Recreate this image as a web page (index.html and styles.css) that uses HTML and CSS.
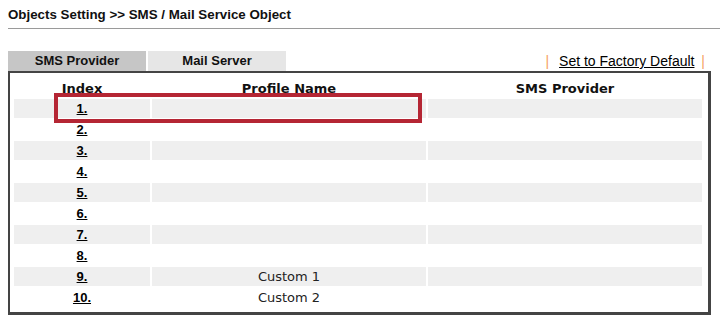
FILE: index.html
```html
<!DOCTYPE html>
<html>
<head>
    <link rel="stylesheet" href="styles.css">
</head>
<body>
    <div class="page">
        <div class="title">Objects Setting &gt;&gt; SMS / Mail Service Object</div>

        <div class="tab-bar">
            <div class="tabs">
                <span class="tab active">SMS Provider</span>
                <span class="tab">Mail Server</span>
            </div>
            <div class="factory">
                <span class="sep">|</span>
                <a href="#">Set to Factory Default</a>
                <span class="sep">|</span>
            </div>
        </div>

        <div class="box">
            <table class="list">
                <thead>
                    <tr>
                        <th class="col-index">Index</th>
                        <th class="col-name">Profile Name</th>
                        <th class="col-provider">SMS Provider</th>
                    </tr>
                </thead>
                <tbody>
                    <tr class="odd"><td><a href="#">1.</a></td><td></td><td></td></tr>
                    <tr><td><a href="#">2.</a></td><td></td><td></td></tr>
                    <tr class="odd"><td><a href="#">3.</a></td><td></td><td></td></tr>
                    <tr><td><a href="#">4.</a></td><td></td><td></td></tr>
                    <tr class="odd"><td><a href="#">5.</a></td><td></td><td></td></tr>
                    <tr><td><a href="#">6.</a></td><td></td><td></td></tr>
                    <tr class="odd"><td><a href="#">7.</a></td><td></td><td></td></tr>
                    <tr><td><a href="#">8.</a></td><td></td><td></td></tr>
                    <tr class="odd"><td><a href="#">9.</a></td><td>Custom 1</td><td></td></tr>
                    <tr><td><a href="#">10.</a></td><td>Custom 2</td><td></td></tr>
                </tbody>
            </table>
            <!-- highlight around the first profile -->
            <div class="highlight"></div>
        </div>
    </div>
</body>
</html>
```

FILE: styles.css
```css
body {
    margin: 0;
    padding: 0;
    background: #ffffff;
    color: #000;
    font-family: "Liberation Sans", Arial, sans-serif;
}

.page {
    padding-left: 8px;
}

.title {
    font-size: 13.33px;
    font-weight: bold;
    line-height: 16px;
    padding: 7px 0 5px 0;
    border-bottom: 1px solid #9a9a9a;
    color: #111;
}

.tab-bar {
    display: flex;
    justify-content: space-between;
    align-items: flex-end;
    width: 700px;
    margin-top: 22px;
}

.tabs {
    display: flex;
    gap: 2px;
}

.tab {
    width: 138px;
    height: 20px;
    line-height: 20px;
    text-align: center;
    font-size: 13px;
    font-weight: bold;
    background: #e6e6e6;
    color: #111;
}

.tab.active {
    background: #c6c6c6;
}

.factory {
    font-size: 14px;
    line-height: 16px;
    padding-bottom: 2px;
    padding-right: 3px;
}

.factory a {
    color: #000;
    text-decoration: underline;
}

.sep {
    color: #f5a064;
    padding: 0 6px;
}

.sep:last-child {
    padding-right: 0;
    padding-left: 3px;
}

.box {
    position: relative;
    width: 695px;
    border: 2px solid #444;
    border-right-width: 3px;
    border-bottom-width: 3px;
    padding: 1px 1px 3px 2px;
}

.list {
    border-spacing: 2px;
    font-family: "DejaVu Sans", Verdana, sans-serif;
    font-size: 13px;
}

.list th {
    height: 21px;
    padding: 0;
    font-weight: bold;
    text-align: center;
    vertical-align: bottom;
    line-height: 17px;
    color: #111;
}

.col-index {
    width: 136px;
}

.col-name,
.col-provider {
    width: 274px;
}

.list td {
    height: 19px;
    padding: 0;
    text-align: center;
    color: #222;
    line-height: 19px;
}

.list tr.odd td {
    background: #efefef;
}

.list td a {
    font-family: "Liberation Sans", Arial, sans-serif;
    font-weight: bold;
    color: #000;
    text-decoration: underline;
}

.highlight {
    position: absolute;
    left: 44px;
    top: 20px;
    width: 360px;
    height: 22px;
    border: 4px solid #b52634;
}
```
